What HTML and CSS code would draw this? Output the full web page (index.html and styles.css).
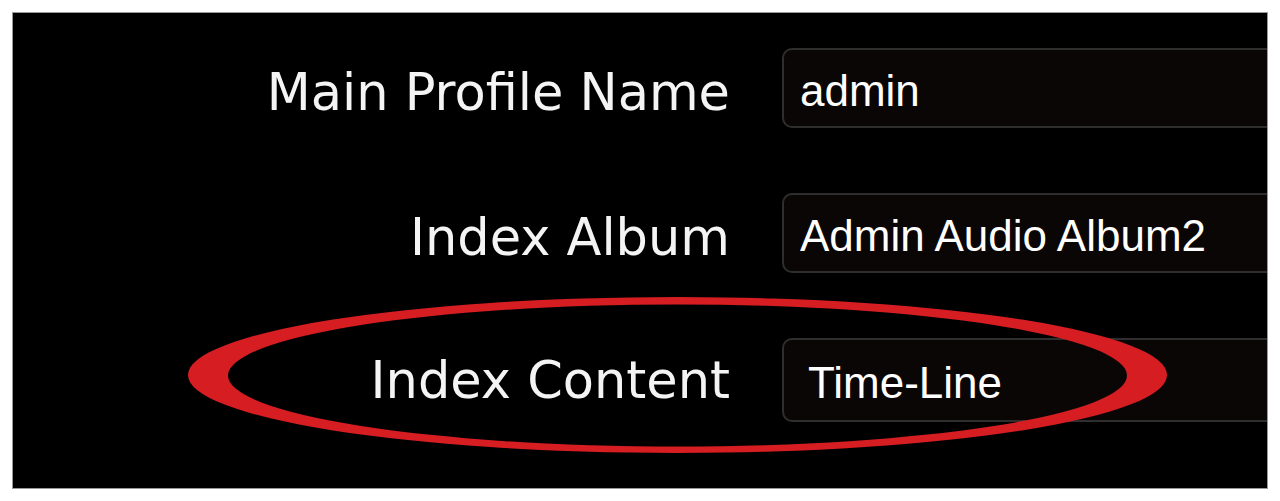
FILE: index.html
```html
<!DOCTYPE html>
<html lang="en">

<head>
    <meta charset="UTF-8">
    <meta name="viewport" content="width=device-width, initial-scale=1.0">
    <title>Profile Settings</title>
    <link rel="stylesheet" href="styles.css">
</head>

<body>
    <div class="panel">
        <form class="settings-form">
            <label for="profile-name">Main Profile Name</label>
            <input type="text" id="profile-name" value="admin" readonly>

            <label for="index-album">Index Album</label>
            <input type="text" id="index-album" value="Admin Audio Album2" readonly>

            <label for="index-content" class="last">Index Content</label>
            <input type="text" id="index-content" class="indent" value="Time-Line" readonly>
        </form>

        <!-- red highlight round the Index Content row -->
        <svg class="highlight" viewBox="13 13 1254 475" width="1254" height="475">
            <path fill="#d61d21" fill-rule="evenodd"
                d="M188,375 a489.5,78 0 1,0 979,0 a489.5,78 0 1,0 -979,0 Z
                   M228,375.5 a449.5,71 0 1,0 899,0 a449.5,71 0 1,0 -899,0 Z" />
        </svg>
    </div>
</body>
</html>
```

FILE: styles.css
```css
body {
    font-family: "DejaVu Sans", Verdana, sans-serif;
    background-color: #fff;
    color: #fff;
    margin: 0;
    padding: 12px;
}

.panel {
    position: relative;
    height: 477px;
    box-sizing: border-box;
    background-color: #000;
    border: 1px solid #999;
    overflow: hidden;
    padding-top: 35px;
}

.settings-form {
    display: grid;
    grid-template-columns: 717px 1fr;
    column-gap: 52px;
    row-gap: 65px;
}

label {
    display: flex;
    align-items: center;
    justify-content: flex-end;
    height: 80px;
    box-sizing: border-box;
    padding-top: 9px;
    color: #f4f4f4;
    font-size: 51px;
    white-space: nowrap;
}

label.last {
    padding-top: 4px;
}

input[type="text"] {
    width: 560px;
    height: 80px;
    box-sizing: border-box;
    margin: 0;
    padding: 6px 16px 0;
    border: 2px solid #2e2e2e;
    border-radius: 10px;
    background-color: #0a0606;
    color: #fff;
    font-family: "Liberation Sans", Arial, sans-serif;
    font-size: 44px;
}

input[type="text"]:focus {
    outline: none;
}

input.indent {
    height: 84px;
    padding-left: 24px;
}

.highlight {
    position: absolute;
    top: 0;
    left: 0;
    pointer-events: none;
}
```
